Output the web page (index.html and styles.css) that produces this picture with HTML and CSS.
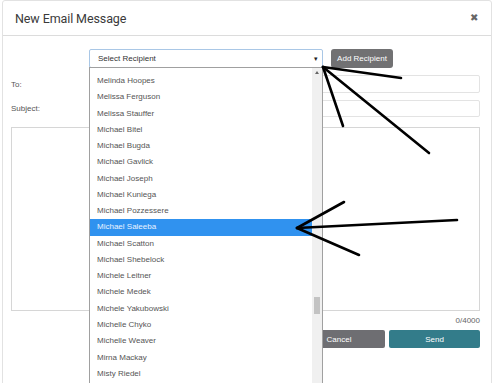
FILE: index.html
```html
<!DOCTYPE html>
<html lang="en">
<head>
    <meta charset="UTF-8">
    <meta name="viewport" content="width=device-width, initial-scale=1.0">
    <title>New Email Message</title>
    <link rel="stylesheet" href="styles.css">
</head>
<body>
    <div class="modal">
        <div class="modal-header">
            <h1 class="modal-title">New Email Message</h1>
            <span class="close">&#10006;</span>
        </div>
        <div class="modal-body">
            <div class="recipient-row">
                <div class="select">
                    <span>Select Recipient</span>
                    <span class="caret">&#9662;</span>
                    <div class="dropdown">
                        <ul class="options">
                            <li>Melinda Hoopes</li>
                            <li>Melissa Ferguson</li>
                            <li>Melissa Stauffer</li>
                            <li>Michael Bitel</li>
                            <li>Michael Bugda</li>
                            <li>Michael Gavlick</li>
                            <li>Michael Joseph</li>
                            <li>Michael Kuniega</li>
                            <li>Michael Pozzessere</li>
                            <li class="selected">Michael Saleeba</li>
                            <li>Michael Scatton</li>
                            <li>Michael Shebelock</li>
                            <li>Michele Leitner</li>
                            <li>Michele Medek</li>
                            <li>Michele Yakubowski</li>
                            <li>Michelle Chyko</li>
                            <li>Michelle Weaver</li>
                            <li>Mirna Mackay</li>
                            <li>Misty Riedel</li>
                        </ul>
                        <div class="scrollbar">
                            <span class="scroll-up"></span>
                            <span class="thumb"></span>
                        </div>
                    </div>
                </div>
                <button class="btn btn-add">Add Recipient</button>
            </div>
            <div class="field-row to-row">
                <label>To:</label>
                <div class="input"></div>
            </div>
            <div class="field-row subject-row">
                <label>Subject:</label>
                <div class="input"></div>
            </div>
            <div class="message"></div>
            <div class="counter">0/4000</div>
            <div class="actions">
                <button class="btn btn-cancel">Cancel</button>
                <button class="btn btn-send">Send</button>
            </div>
        </div>
    </div>

    <!-- hand drawn arrows on top of the screenshot -->
    <svg class="arrows" width="500" height="383" viewBox="0 0 500 383">
        <g stroke="#000" stroke-width="2.6" stroke-linecap="round" fill="none">
            <line x1="323" y1="67" x2="401" y2="78"/>
            <line x1="323" y1="67" x2="343" y2="126"/>
            <line x1="323" y1="67" x2="429" y2="153"/>
            <line x1="297" y1="228" x2="457" y2="220"/>
            <line x1="297" y1="228" x2="344" y2="202"/>
            <line x1="297" y1="228" x2="359" y2="255"/>
        </g>
    </svg>
</body>
</html>
```

FILE: styles.css
```css
body {
    margin: 0;
    background: #fff;
    font-family: "Liberation Sans", Arial, sans-serif;
    font-size: 8px;
    color: #555;
    overflow: hidden;
}
.modal {
    margin-left: 2px;
    width: 490px;
    height: 400px;
    box-sizing: border-box;
    border: 1px solid #e2e2e2;
    border-radius: 3px;
}
.modal-header {
    height: 34px;
    border-bottom: 1px solid #dcdcdc;
    display: flex;
    align-items: center;
    justify-content: space-between;
    padding: 0 13px 0 12px;
}
.modal-title {
    margin: 0;
    font-family: Roboto, "Liberation Sans", sans-serif;
    font-weight: 400;
    font-size: 12.5px;
    letter-spacing: -0.1px;
    color: #3a3a3a;
}
.close {
    font-size: 10px;
    color: #666;
    margin-top: -1px;
}
.modal-body {
    padding: 13px 11px 0 8px;
}
.recipient-row {
    display: flex;
    gap: 8px;
    margin-left: 78px;
    height: 19px;
}
.select {
    position: relative;
    width: 234px;
    box-sizing: border-box;
    border: 1px solid #a9c7e6;
    border-radius: 2px;
    display: flex;
    align-items: center;
    justify-content: space-between;
    padding: 0 4px 0 8px;
    color: #333;
}
.caret {
    font-size: 7px;
    color: #222;
}
.dropdown {
    position: absolute;
    top: 17px;
    left: -1px;
    width: 234px;
    height: 330px;
    box-sizing: border-box;
    background: #fff;
    border: 1px solid #a0a0a0;
    padding-top: 5px;
}
.options {
    list-style: none;
    margin: 0 10px 0 0;
    padding: 0;
}
.options li {
    height: 16.28px;
    line-height: 16.28px;
    padding-left: 7px;
    color: #555;
}
.options li.selected {
    background: #3092ef;
    color: #eaf3ff;
}
.scrollbar {
    position: absolute;
    top: 0;
    right: 0;
    bottom: 0;
    width: 10px;
    background: #f0f0f0;
}
.scroll-up {
    position: absolute;
    top: 3px;
    left: 3px;
    border-left: 2px solid transparent;
    border-right: 2px solid transparent;
    border-bottom: 3px solid #666;
}
.thumb {
    position: absolute;
    top: 229px;
    left: 2px;
    width: 6px;
    height: 17px;
    background: #c3c3c3;
}
.btn {
    border: none;
    border-radius: 2px;
    font-family: "Liberation Sans", Arial, sans-serif;
    font-size: 8px;
    color: #fff;
    padding: 0;
    cursor: pointer;
}
.btn-add {
    width: 62px;
    background: #717173;
    border-radius: 3px;
}
.field-row {
    display: flex;
    align-items: center;
}
.field-row label {
    width: 78px;
    color: #555;
}
.field-row .input {
    flex: 1;
    box-sizing: border-box;
    border: 1px solid #e3e3e3;
    border-radius: 2px;
}
.to-row {
    margin-top: 7px;
}
.to-row .input {
    height: 18px;
}
.subject-row {
    margin-top: 7px;
}
.subject-row .input {
    height: 17px;
}
.message {
    margin-top: 10px;
    height: 184px;
    box-sizing: border-box;
    border: 1px solid #d6d6d6;
}
.counter {
    margin-top: 5px;
    text-align: right;
    line-height: 10px;
    color: #666;
}
.actions {
    display: flex;
    justify-content: flex-end;
    gap: 4px;
    margin-top: 4px;
}
.actions .btn {
    height: 18px;
}
.btn-cancel {
    width: 92px;
    background: #6e6e72;
}
.btn-send {
    width: 91px;
    background: #337c8a;
}
.arrows {
    position: absolute;
    top: 0;
    left: 0;
    pointer-events: none;
}
```
